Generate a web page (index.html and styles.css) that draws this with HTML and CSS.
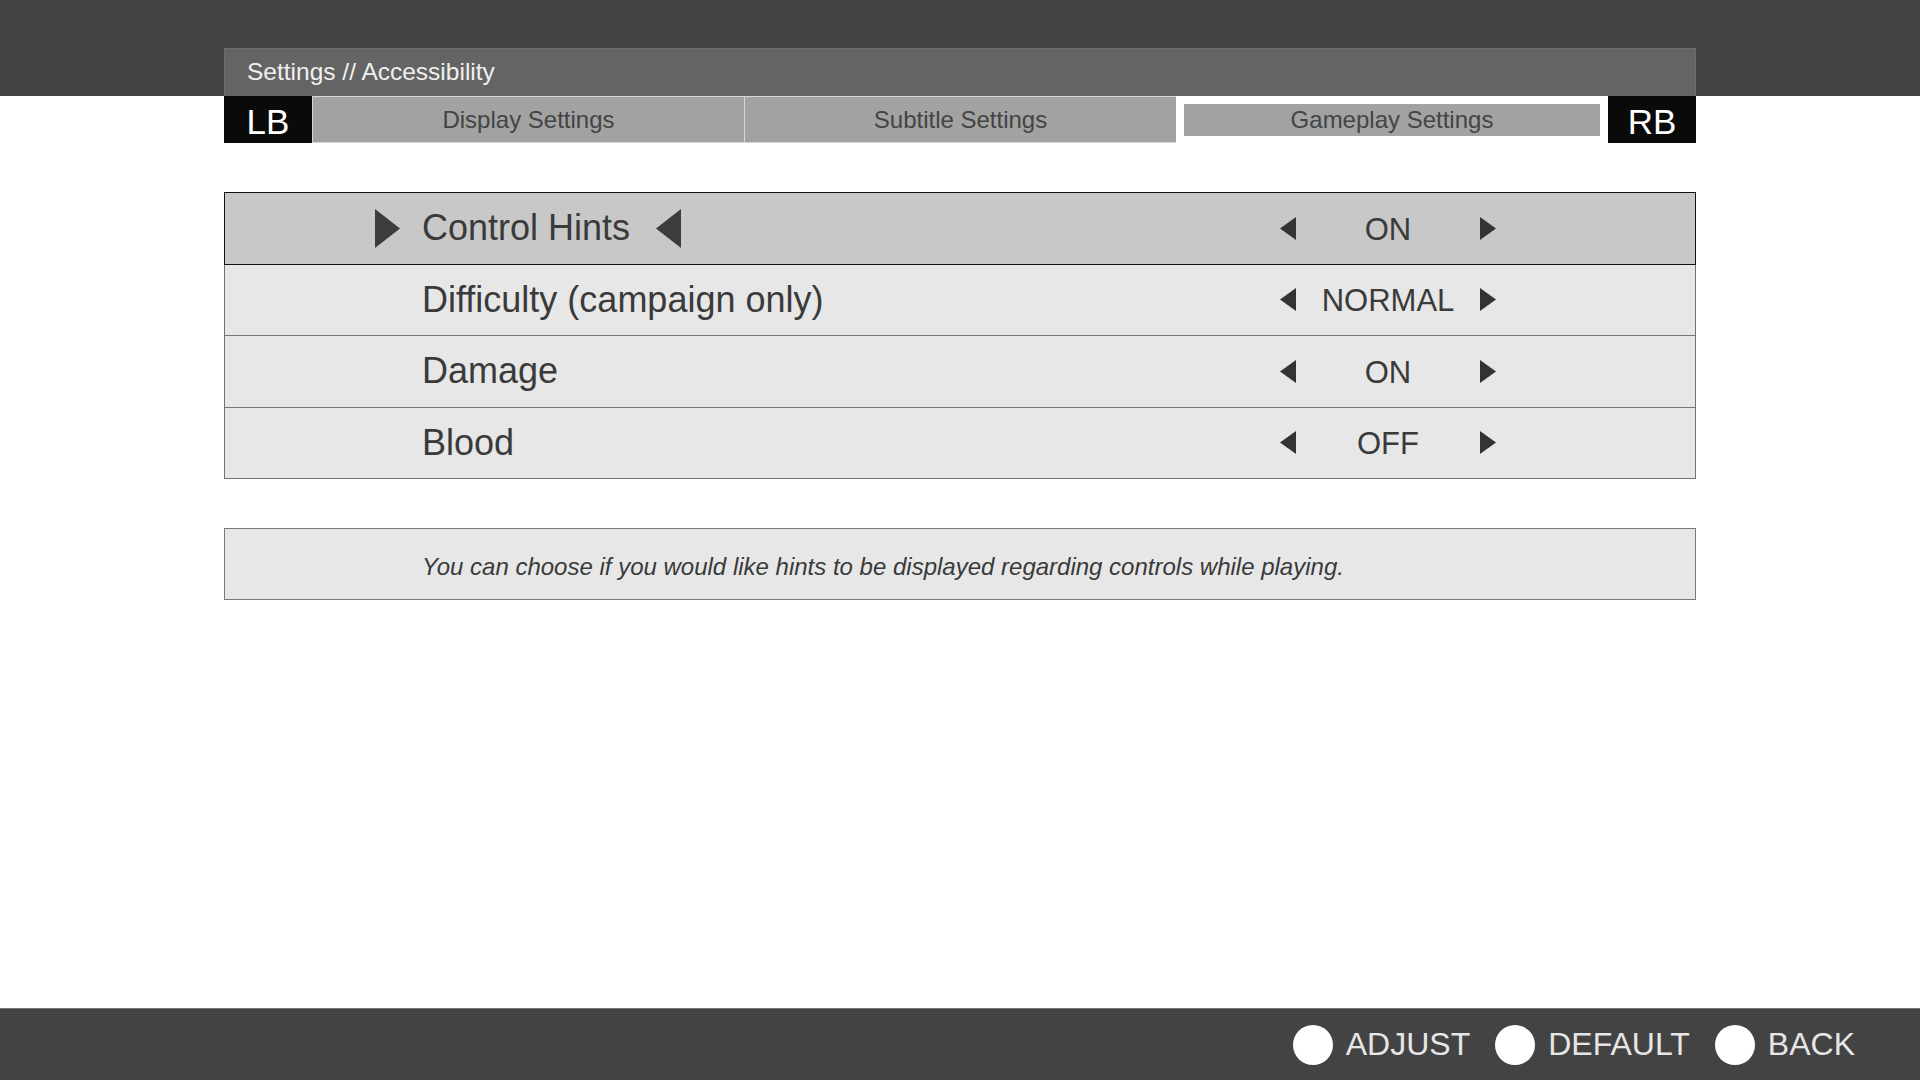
FILE: index.html
```html
<!DOCTYPE html>
<html lang="en">
<head>
<meta charset="utf-8">
<title>Settings // Accessibility</title>
<link rel="stylesheet" href="styles.css">
</head>
<body>
<div class="page">
  <header class="topbar">
    <div class="header-panel">Settings // Accessibility</div>
  </header>
  <main class="main">
    <nav class="tabs">
      <div class="bumper">LB</div>
      <div class="tab">Display Settings</div>
      <div class="tab">Subtitle Settings</div>
      <div class="tab active"><span class="tab-inner">Gameplay Settings</span></div>
      <div class="bumper">RB</div>
    </nav>

    <section class="list">
      <div class="row selected">
        <div class="label">
          <svg class="marker" viewBox="0 0 25 39"><polygon points="0,0 25,19.5 0,39"/></svg>
          <span class="label-text">Control Hints</span>
          <svg class="marker" viewBox="0 0 25 39"><polygon points="25,0 0,19.5 25,39"/></svg>
        </div>
        <div class="value">
          <svg class="arrow" viewBox="0 0 16 23"><polygon points="16,0 0,11.5 16,23"/></svg>
          <span class="value-text">ON</span>
          <svg class="arrow" viewBox="0 0 16 23"><polygon points="0,0 16,11.5 0,23"/></svg>
        </div>
      </div>
      <div class="row">
        <div class="label">
          <span class="marker-space"></span>
          <span class="label-text">Difficulty (campaign only)</span>
        </div>
        <div class="value">
          <svg class="arrow" viewBox="0 0 16 23"><polygon points="16,0 0,11.5 16,23"/></svg>
          <span class="value-text">NORMAL</span>
          <svg class="arrow" viewBox="0 0 16 23"><polygon points="0,0 16,11.5 0,23"/></svg>
        </div>
      </div>
      <div class="row">
        <div class="label">
          <span class="marker-space"></span>
          <span class="label-text">Damage</span>
        </div>
        <div class="value">
          <svg class="arrow" viewBox="0 0 16 23"><polygon points="16,0 0,11.5 16,23"/></svg>
          <span class="value-text">ON</span>
          <svg class="arrow" viewBox="0 0 16 23"><polygon points="0,0 16,11.5 0,23"/></svg>
        </div>
      </div>
      <div class="row">
        <div class="label">
          <span class="marker-space"></span>
          <span class="label-text">Blood</span>
        </div>
        <div class="value">
          <svg class="arrow" viewBox="0 0 16 23"><polygon points="16,0 0,11.5 16,23"/></svg>
          <span class="value-text">OFF</span>
          <svg class="arrow" viewBox="0 0 16 23"><polygon points="0,0 16,11.5 0,23"/></svg>
        </div>
      </div>
    </section>

    <section class="description">
      <p>You can choose if you would like hints to be displayed regarding controls while playing.</p>
    </section>
  </main>
  <footer class="footer">
    <div class="hint"><span class="button-dot"></span><span>ADJUST</span></div>
    <div class="hint"><span class="button-dot"></span><span>DEFAULT</span></div>
    <div class="hint"><span class="button-dot"></span><span>BACK</span></div>
  </footer>
</div>
</body>
</html>
```

FILE: styles.css
```css
* {
  box-sizing: border-box;
}

html, body {
  margin: 0;
  padding: 0;
  background: #ffffff;
}

body {
  font-family: "Liberation Sans", Arial, Helvetica, sans-serif;
  color: #383838;
}

.page {
  width: 1920px;
  height: 1080px;
  display: flex;
  flex-direction: column;
  overflow: hidden;
}

.topbar {
  height: 96px;
  background: #434343;
  padding-top: 48px;
  flex-shrink: 0;
}

.header-panel {
  width: 1472px;
  height: 48px;
  margin: 0 auto;
  background: #646464;
  border: 1px solid #6c6c6c;
  border-bottom: none;
  color: #f0f0f0;
  font-size: 24.5px;
  line-height: 46px;
  padding-left: 22px;
}

.main {
  flex: 1;
  width: 1472px;
  margin: 0 auto;
}

.tabs {
  display: grid;
  grid-template-columns: 88px repeat(3, 1fr) 88px;
  height: 47px;
}

.bumper {
  background: #0a0a0a;
  color: #ffffff;
  font-size: 35px;
  display: flex;
  align-items: center;
  justify-content: center;
  padding-top: 4px;
}

.tab {
  min-width: 0;
  background: #a2a2a2;
  border-left: 1px solid #d6d6d6;
  border-top: 1px solid #d6d6d6;
  border-bottom: 1px solid #d6d6d6;
  color: #444444;
  font-size: 24px;
  display: flex;
  align-items: center;
  justify-content: center;
}

.tab.active {
  background: #ffffff;
  border: none;
  padding: 8px 8px 7px 8px;
}

.tab-inner {
  width: 100%;
  height: 100%;
  background: #a2a2a2;
  display: flex;
  align-items: center;
  justify-content: center;
}

.list {
  margin-top: 49px;
  display: flex;
  flex-direction: column;
}

.row {
  height: 72.5px;
  margin-top: -1px;
  border: 1px solid #747474;
  background: #e7e7e7;
  display: flex;
  align-items: center;
  position: relative;
}

.row:first-child {
  margin-top: 0;
}

.row.selected {
  background: #c8c8c8;
  border-color: #111111;
  z-index: 1;
}

.label {
  flex: 1;
  display: flex;
  align-items: center;
  gap: 22px;
  padding-left: 150px;
}

.label-text + .marker {
  margin-left: 4px;
}

.marker {
  width: 25px;
  height: 39px;
  fill: #3c3c3c;
  flex-shrink: 0;
}

.marker-space {
  width: 25px;
  height: 39px;
  flex-shrink: 0;
}

.label-text {
  font-size: 36px;
  color: #3a3a3a;
}

.value {
  width: 216px;
  margin-right: 199px;
  display: flex;
  align-items: center;
}

.arrow {
  width: 16px;
  height: 23px;
  fill: #333333;
  flex-shrink: 0;
}

.value-text {
  flex: 1;
  text-align: center;
  font-size: 31px;
  color: #3a3a3a;
  padding-top: 3px;
}

.description {
  margin-top: 49px;
  height: 72px;
  border: 1px solid #7a7a7a;
  background: #e7e7e7;
  display: flex;
  align-items: center;
  padding-left: 197px;
  padding-top: 6px;
}

.description p {
  margin: 0;
  font-size: 24px;
  font-style: italic;
  color: #3a3a3a;
}

.footer {
  height: 72px;
  flex-shrink: 0;
  background: #434343;
  border-top: 1px solid #767676;
  display: flex;
  align-items: center;
  justify-content: flex-end;
  gap: 25px;
  padding-right: 65px;
}

.hint {
  display: flex;
  align-items: center;
  gap: 13px;
  color: #e6e6e6;
  font-size: 32px;
}

.button-dot {
  width: 40px;
  height: 40px;
  border-radius: 50%;
  background: #ffffff;
  display: inline-block;
}
```
